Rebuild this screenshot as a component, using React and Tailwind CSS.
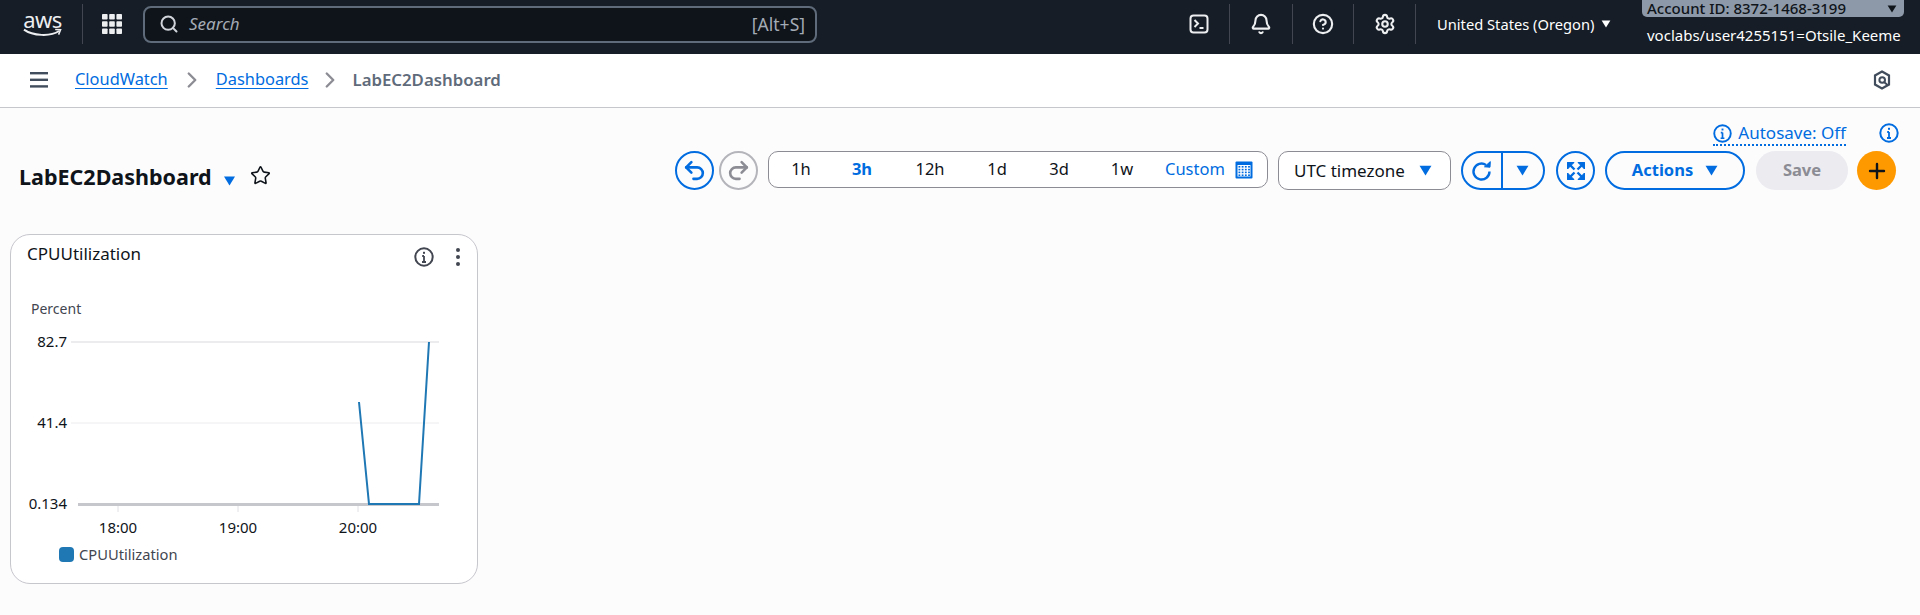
import React from 'react'
import { Bell, CircleHelp, Settings, Star, Search, Undo2, Redo2, Plus, ChevronRight } from 'lucide-react'

const font = { fontFamily: '"Noto Sans", sans-serif' }

const Caret = ({ className }) => (
  <svg viewBox="0 0 12 10" className={className}>
    <path d="M0.5 0.5h11L6 9.5z" fill="currentColor" />
  </svg>
)

const InfoIcon = ({ className }) => (
  <svg viewBox="0 0 20 20" className={className} fill="none" stroke="currentColor">
    <circle cx="10" cy="10" r="8.7" strokeWidth="2" />
    <path d="M10 9v6M8 15h4M8.2 9H10" strokeWidth="1.8" />
    <rect x="9" y="4.8" width="2" height="2" fill="currentColor" stroke="none" />
  </svg>
)

const GridIcon = () => (
  <svg viewBox="0 0 20 20" className="w-[20px] h-[20px]" fill="#eceef0">
    {[0, 7.2, 14.4].map(x => [0, 7.2, 14.4].map(y => (
      <rect key={x + '-' + y} x={x} y={y} width="5.6" height="5.6" rx="0.8" />
    )))}
  </svg>
)

const TerminalIcon = () => (
  <svg viewBox="0 0 20 20" className="w-[20px] h-[20px]" fill="none" stroke="#eceef0" strokeWidth="2">
    <rect x="1.5" y="1.5" width="17" height="17" rx="3" />
    <path d="M5.5 6l3.5 3.5-3.5 3.5M10.5 14h4" />
  </svg>
)

const HexIcon = () => (
  <svg viewBox="0 0 20 20" className="w-[20px] h-[20px]" fill="none" stroke="#414d5c" strokeWidth="2.2">
    <path d="M10 1.5l7 4v9l-7 4-7-4v-9z" />
    <circle cx="10.2" cy="10" r="2.8" strokeWidth="2" />
    <path d="M12 12l3.5 3" strokeWidth="2" />
  </svg>
)

const CalendarIcon = () => (
  <svg viewBox="0 0 18 18" className="w-[18px] h-[18px]">
    <rect x="0.5" y="0.5" width="17" height="17" rx="1" fill="#006ce0" />
    <rect x="2.5" y="4" width="13" height="11.5" fill="#fff" />
    {[3.5, 6.7, 9.9, 13.1].map(x => [5, 7.8, 10.6, 13.4].map(y => (
      <rect key={x + '-' + y} x={x} y={y} width="1.8" height="1.6" fill="#006ce0" />
    )))}
  </svg>
)

const FullscreenIcon = () => (
  <svg viewBox="0 0 18 18" className="w-[18px] h-[18px]" fill="#006ce0" stroke="#006ce0">
    <path d="M0.5 0.5h6.5l-6.5 6.5zM17.5 0.5h-6.5l6.5 6.5zM0.5 17.5h6.5l-6.5-6.5zM17.5 17.5h-6.5l6.5-6.5z" />
    <path d="M2.5 2.5l5 5M15.5 2.5l-5 5M2.5 15.5l5-5M15.5 15.5l-5-5" strokeWidth="2.4" />
    <path d="M0.5 0.5v6M0.5 0.5h6M17.5 0.5v6M17.5 0.5h-6M0.5 17.5v-6M0.5 17.5h6M17.5 17.5v-6M17.5 17.5h-6" strokeWidth="1.6" />
  </svg>
)

const RefreshIcon = () => (
  <svg viewBox="0 0 22 22" className="w-[22px] h-[22px]" fill="none" stroke="#006ce0" strokeWidth="2.4">
    <path d="M18.5 11.5a8 8 0 1 1-3.5-6.6" />
    <path d="M13.5 6.8l5.5 0.4 0.3-5.6z" fill="#006ce0" strokeWidth="1" />
  </svg>
)

const Hamburger = () => (
  <svg viewBox="0 0 18 16" className="w-[18px] h-[16px]" fill="#414d5c">
    <rect x="0" y="0" width="18" height="2.4" />
    <rect x="0" y="6.6" width="18" height="2.4" />
    <rect x="0" y="13.2" width="18" height="2.4" />
  </svg>
)

const NavDivider = () => <div className="w-px h-[40px] bg-[#424650]" />

const TopNav = () => (
  <div className="h-[54px] pb-[6px] bg-[#161d26] flex items-center text-[#eceef0] relative">
    <div className="w-[82px] flex flex-col items-center pl-[3px] shrink-0">
      <span className="text-[22px] leading-[18px] tracking-[-0.5px]">aws</span>
      <svg viewBox="0 0 40 10" className="w-[39px] h-[10px]" fill="none">
        <path d="M1 1.5C10 8 28 9 37 3" stroke="#eceef0" strokeWidth="2" />
        <path d="M33 1.5l5.5 0.2-2 5" stroke="#eceef0" strokeWidth="1.6" />
      </svg>
    </div>
    <NavDivider />
    <div className="ml-[19px]"><GridIcon /></div>
    <div className="ml-[21px] w-[674px] h-[37px] bg-[#0f141a] border-2 border-[#5f6b7a] rounded-lg flex items-center pl-[14px] pr-[10px]">
      <Search size={20} strokeWidth={2.4} className="text-[#d1d5db]" />
      <span className="ml-[10px] italic text-[#a4abb5] text-[17px]">Search</span>
      <span className="ml-auto text-[#a4abb5] text-[17.5px]">[Alt+S]</span>
    </div>
    <div className="ml-[372px]"><TerminalIcon /></div>
    <div className="ml-[20px]"><NavDivider /></div>
    <div className="w-[62px] flex justify-center"><Bell size={22} strokeWidth={2.3} /></div>
    <NavDivider />
    <div className="w-[60px] flex justify-center"><CircleHelp size={22} strokeWidth={2.3} /></div>
    <NavDivider />
    <div className="w-[61px] flex justify-center"><Settings size={22} strokeWidth={2.3} /></div>
    <NavDivider />
    <div className="ml-[21px] flex items-center gap-[7px]">
      <span className="text-[14.7px] text-white whitespace-nowrap">United States (Oregon)</span>
      <Caret className="w-[10px] h-[8px] text-white" />
    </div>
    <div className="absolute left-[1642px] top-0 w-[262px]">
      <div className="h-[17px] bg-[#8d99a8] rounded-b-[5px] flex items-center justify-between pl-[5px] pr-[7px] text-[#0f141a] text-[15px] font-medium leading-[17px]">
        <span className="whitespace-nowrap">Account ID: 8372-1468-3199</span>
        <Caret className="w-[10px] h-[8px]" />
      </div>
      <div className="pl-[5px] mt-[8px] text-[15px] text-white leading-[20px] whitespace-nowrap">voclabs/user4255151=Otsile_Keeme</div>
    </div>
  </div>
)

const Breadcrumbs = () => (
  <div className="h-[54px] pb-[2px] bg-white border-b border-[#c6c6cd] flex items-center pl-[30px] pr-[28px] text-[16.4px]">
    <Hamburger />
    <a className="ml-[27px] text-[#006ce0] underline underline-offset-[3px]">CloudWatch</a>
    <ChevronRight size={26} strokeWidth={2.2} className="text-[#8c8c94] mx-[11px]" />
    <a className="text-[#006ce0] underline underline-offset-[3px]">Dashboards</a>
    <ChevronRight size={26} strokeWidth={2.2} className="text-[#8c8c94] mx-[9px]" />
    <span className="font-semibold text-[#5f6b7a] text-[16.8px]">LabEC2Dashboard</span>
    <div className="ml-auto"><HexIcon /></div>
  </div>
)

const CircleBtn = ({ children, muted }) => (
  <button className={'w-[39px] h-[39px] rounded-full border-2 flex items-center justify-center ' + (muted ? 'border-[#b4b4bb] text-[#8c8c94]' : 'border-[#006ce0] text-[#006ce0]')}>
    {children}
  </button>
)

const ranges = [
  { label: '1h', cls: 'w-[62px]' },
  { label: '3h', cls: 'w-[60px] font-bold text-[#006ce0]' },
  { label: '12h', cls: 'w-[76px]' },
  { label: '1d', cls: 'w-[58px]' },
  { label: '3d', cls: 'w-[66px]' },
  { label: '1w', cls: 'w-[60px]' },
]

const Toolbar = () => (
  <div className="flex flex-col items-end">
    <div className="flex items-center h-[20px] mr-[-3px]">
      <div className="flex items-center gap-[6px] text-[#006ce0] border-b-2 border-dotted border-[#006ce0] h-[23px] mt-[2px]">
        <InfoIcon className="w-[19px] h-[19px]" />
        <span className="text-[17px] leading-[20px]">Autosave: Off</span>
      </div>
      <InfoIcon className="w-[20px] h-[20px] text-[#006ce0] ml-[33px]" />
    </div>
    <div className="flex items-center mt-[8px] text-[16.5px] text-[#0f141a]">
      <CircleBtn><Undo2 size={25} strokeWidth={2.5} /></CircleBtn>
      <div className="ml-[5px]"><CircleBtn muted><Redo2 size={25} strokeWidth={2.5} /></CircleBtn></div>
      <div className="ml-[10px] w-[500px] h-[37px] -mt-[2px] border border-[#8c8c94] rounded-[10px] bg-white flex items-center pl-[1px]">
        {ranges.map(r => <span key={r.label} className={r.cls + ' text-center'}>{r.label}</span>)}
        <span className="ml-[13px] text-[#006ce0]">Custom</span>
        <div className="ml-[10px]"><CalendarIcon /></div>
      </div>
      <div className="ml-[10px] w-[173px] h-[39px] border border-[#8c8c94] rounded-[10px] bg-white flex items-center pl-[15px]">
        <span className="text-[17px]">UTC timezone</span>
        <Caret className="w-[13px] h-[11px] text-[#006ce0] ml-[14px]" />
      </div>
      <div className="ml-[10px] w-[84px] h-[39px] border-2 border-[#006ce0] rounded-full flex items-center text-[#006ce0]">
        <div className="w-[40px] h-full flex items-center justify-center border-r-2 border-[#006ce0]">
          <RefreshIcon />
        </div>
        <div className="flex-1 flex justify-center pr-[2px]"><Caret className="w-[13px] h-[11px]" /></div>
      </div>
      <div className="ml-[11px]"><CircleBtn><FullscreenIcon /></CircleBtn></div>
      <button className="ml-[10px] w-[140px] h-[39px] border-2 border-[#006ce0] rounded-full flex items-center justify-center gap-[12px] text-[#006ce0] font-bold">
        Actions
        <Caret className="w-[13px] h-[11px]" />
      </button>
      <button className="ml-[11px] w-[92px] h-[39px] bg-[#ebebf0] rounded-full text-[#8c8c94] font-bold">Save</button>
      <button className="ml-[9px] w-[39px] h-[39px] rounded-full bg-[#ff9900] flex items-center justify-center text-[#0f141a]">
        <Plus size={24} strokeWidth={2.4} />
      </button>
    </div>
  </div>
)

const textCls = 'fill-[#0f141a] text-[15px]'

// chart coordinates are card relative (page x - 11, page y - 290)
const Chart = () => (
  <svg width="465" height="290" className="block" style={font}>
    <text x="20" y="24" className="fill-[#424650] text-[14px]">Percent</text>
    <line x1="60" x2="428" y1="52" y2="52" stroke="#ececef" strokeWidth="2" />
    <line x1="60" x2="428" y1="133" y2="133" stroke="#ececef" strokeWidth="1" />
    <line x1="67" x2="428" y1="214.5" y2="214.5" stroke="#c6c6cd" strokeWidth="3" />
    <text x="56" y="57" textAnchor="end" className={textCls}>82.7</text>
    <text x="56" y="138" textAnchor="end" className={textCls}>41.4</text>
    <text x="56" y="219" textAnchor="end" className={textCls}>0.134</text>
    {[107, 227, 347].map(x => <line key={x} x1={x} x2={x} y1="216" y2="222" stroke="#e0e0e4" />)}
    <text x="107" y="243" textAnchor="middle" className={textCls}>18:00</text>
    <text x="227" y="243" textAnchor="middle" className={textCls}>19:00</text>
    <text x="347" y="243" textAnchor="middle" className={textCls}>20:00</text>
    <polyline points="348,112 358,214 408,214 418,52" fill="none" stroke="#1f77b4" strokeWidth="2" />
  </svg>
)

const WidgetCard = () => (
  <div className="ml-[10px] mt-[43px] w-[468px] h-[350px] bg-white border border-[#c6c6cd] rounded-[20px]">
    <div className="flex items-start h-[55px] pl-[16px] pr-[17px] pt-[7px]">
      <span className="text-[17px] leading-[24px] text-[#0f141a]">CPUUtilization</span>
      <InfoIcon className="ml-auto mt-[5px] w-[20px] h-[20px] text-[#424650]" />
      <svg viewBox="0 0 4 18" className="ml-[22px] mt-[6px] w-[4px] h-[18px]" fill="#424650">
        <circle cx="2" cy="2" r="2" /><circle cx="2" cy="9" r="2" /><circle cx="2" cy="16" r="2" />
      </svg>
    </div>
    <Chart />
    <div className="flex items-center -mt-[36px] pl-[48px]">
      <div className="w-[15px] h-[15px] rounded-[4px] bg-[#1f77b4]" />
      <span className="ml-[5px] text-[14.7px] leading-[20px] text-[#424650]">CPUUtilization</span>
    </div>
  </div>
)

export default function App() {
  return (
    <div className="h-[615px] overflow-hidden bg-[#fcfcfd] text-[#0f141a]" style={font}>
      <TopNav />
      <Breadcrumbs />
      <div className="flex justify-between items-start pt-[15px] pl-[19px] pr-[24px]">
        <div className="flex items-center mt-[40px]">
          <h1 className="text-[21.5px] font-bold leading-[28px]">LabEC2Dashboard</h1>
          <Caret className="w-[13px] h-[10px] text-[#006ce0] ml-[11px] mt-[8px]" />
          <Star size={21} strokeWidth={1.8} className="ml-[14px] -mt-[3px] text-[#0f141a]" />
        </div>
        <Toolbar />
      </div>
      <WidgetCard />
    </div>
  )
}
